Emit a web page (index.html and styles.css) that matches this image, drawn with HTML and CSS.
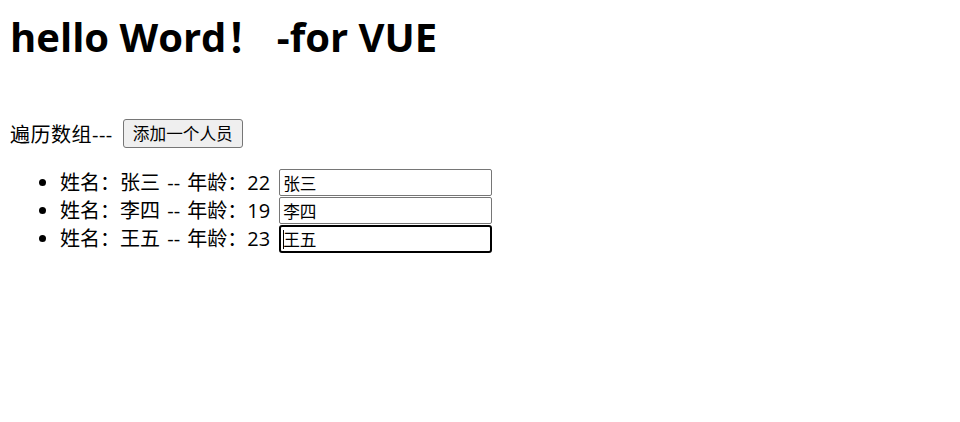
FILE: index.html
```html
<!DOCTYPE html>
<html lang="zh-CN">
<head>
<meta charset="utf-8">
<title>vue for</title>
<link rel="stylesheet" href="styles.css">
</head>
<body>
<div id="app">
  <h1 class="title">hello Word！ -for VUE</h1>
  <div class="row"><span class="row-label">遍历数组---</span><button class="btn">添加一个人员</button></div>
  <ul class="list">
    <li><span class="label">姓名：张三 -- 年龄：22</span><span class="field-wrap"><input class="field" type="text" value="张三"></span></li>
    <li><span class="label">姓名：李四 -- 年龄：19</span><span class="field-wrap"><input class="field" type="text" value="李四"></span></li>
    <li><span class="label">姓名：王五 -- 年龄：23</span><span class="field-wrap"><input class="field focused" type="text" value="王五"><span class="caret"></span></span></li>
  </ul>
</div>
</body>
</html>
```

FILE: styles.css
```css
body {
  margin: 0;
  padding: 0 10px;
  font-family: "Open Sans", "Noto Sans CJK SC", sans-serif;
  font-size: 20px;
  color: #000;
  background: #fff;
}
.title {
  font-family: "Open Sans", "Noto Sans CJK SC", sans-serif;
  font-size: 40px;
  font-weight: bold;
  margin: 9px 0 0;
  line-height: 56px;
  height: 56px;
}
.row {
  margin-top: 53px;
  height: 30px;
  display: flex;
  align-items: center;
  gap: 10px;
}
.row-label {
  letter-spacing: 0.5px;
}
.btn {
  font-family: "Noto Sans CJK SC", sans-serif;
  font-size: 16.67px;
  width: 120px;
  height: 29px;
  padding: 0;
  background: #efefef;
  border: 1px solid #767676;
  border-radius: 3px;
  color: #000;
  line-height: 25px;
}
.list {
  margin: 21px 0 0;
  padding-left: 50px;
}
.list li {
  height: 28px;
  line-height: 28px;
}
.label {
  display: inline-block;
  vertical-align: top;
  line-height: 28px;
  margin-right: 9px;
  word-spacing: 2px;
}
.field-wrap {
  position: relative;
  display: inline-block;
  vertical-align: top;
  height: 28px;
  line-height: 0;
}
.field {
  width: 213px;
  height: 27px;
  box-sizing: border-box;
  font-family: "Noto Sans CJK SC", sans-serif;
  font-size: 16.67px;
  line-height: normal;
  color: #000;
  padding: 0 3px;
  border: 1px solid #767676;
  border-radius: 2px;
  margin: 0;
  vertical-align: top;
}
.field.focused {
  height: 28px;
  border: 2px solid #000;
  border-radius: 3px;
  padding: 0 2px;
  outline: none;
}
.caret {
  position: absolute;
  left: 4px;
  top: 5px;
  width: 1px;
  height: 19px;
  background: #000;
}
```
